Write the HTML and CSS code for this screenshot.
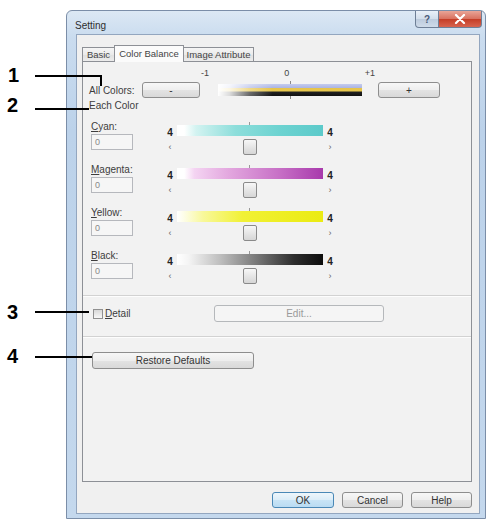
FILE: index.html
```html
<!DOCTYPE html>
<html>
<head>
<meta charset="utf-8">
<title>Setting</title>
<link rel="stylesheet" href="styles.css">
</head>
<body>
<div class="window">
  <div class="titlebar">
    <span class="title">Setting</span>
    <div class="caption-btns">
      <div class="cap help">?</div>
      <div class="cap close">
        <svg width="12" height="10" viewBox="0 0 12 10"><path d="M2 1 L10 9 M10 1 L2 9" stroke="#fff" stroke-width="2.2" stroke-linecap="round"/></svg>
      </div>
    </div>
  </div>
  <div class="client">
    <div class="tabs">
      <div class="tab t-basic">Basic</div>
      <div class="tab t-color active">Color Balance</div>
      <div class="tab t-image">Image Attribute</div>
    </div>
    <div class="panel">
      <div class="scale"><span>-1</span><span>0</span><span>+1</span></div>
      <div class="allrow">
        <span class="lbl">All Colors:</span>
        <div class="btn b-minus">-</div>
        <div class="allbar"></div>
        <div class="btn b-plus">+</div>
      </div>
      <div class="each">Each Color</div>
      <div class="colors">
        <div class="crow">
          <div class="ccol">
            <div class="clabel"><u>C</u>yan:</div>
            <div class="cinput">0</div>
          </div>
          <div class="slider">
            <div class="srow"><span class="snum">4</span><div class="bar cyan"></div><span class="snum">4</span></div>
            <div class="arrows"><span class="arr">&lsaquo;</span><div class="thumb"></div><span class="arr">&rsaquo;</span></div>
          </div>
        </div>
        <div class="crow">
          <div class="ccol">
            <div class="clabel"><u>M</u>agenta:</div>
            <div class="cinput">0</div>
          </div>
          <div class="slider">
            <div class="srow"><span class="snum">4</span><div class="bar magenta"></div><span class="snum">4</span></div>
            <div class="arrows"><span class="arr">&lsaquo;</span><div class="thumb"></div><span class="arr">&rsaquo;</span></div>
          </div>
        </div>
        <div class="crow">
          <div class="ccol">
            <div class="clabel"><u>Y</u>ellow:</div>
            <div class="cinput">0</div>
          </div>
          <div class="slider">
            <div class="srow"><span class="snum">4</span><div class="bar yellow"></div><span class="snum">4</span></div>
            <div class="arrows"><span class="arr">&lsaquo;</span><div class="thumb"></div><span class="arr">&rsaquo;</span></div>
          </div>
        </div>
        <div class="crow">
          <div class="ccol">
            <div class="clabel"><u>B</u>lack:</div>
            <div class="cinput">0</div>
          </div>
          <div class="slider">
            <div class="srow"><span class="snum">4</span><div class="bar black"></div><span class="snum">4</span></div>
            <div class="arrows"><span class="arr">&lsaquo;</span><div class="thumb"></div><span class="arr">&rsaquo;</span></div>
          </div>
        </div>
      </div>
      <div class="sep"></div>
      <div class="detail">
        <div class="dgroup"><span class="chk"></span><span class="dlabel"><u>D</u>etail</span></div>
        <div class="btn disabled b-edit">Edit...</div>
      </div>
      <div class="sep sep2"></div>
      <div class="btn b-restore">Restore Defaults</div>
    </div>
    <div class="footer">
      <div class="btn default b-ok">OK</div>
      <div class="btn b-cancel">Cancel</div>
      <div class="btn b-help">Help</div>
    </div>
  </div>
</div>

<div class="callout n1">1</div>
<div class="cline h1"></div>
<div class="cline v1"></div>
<div class="callout n2">2</div>
<div class="cline h2"></div>
<div class="callout n3">3</div>
<div class="cline h3"></div>
<div class="callout n4">4</div>
<div class="cline h4"></div>
</body>
</html>
```

FILE: styles.css
```css
* { box-sizing: border-box; }
html, body { margin: 0; padding: 0; }
body {
  width: 489px;
  height: 523px;
  background: #fff;
  font-family: "Liberation Sans", Arial, sans-serif;
  font-size: 10px;
  color: #3d3d3d;
  position: relative;
  overflow: hidden;
}

/* window frame */
.window {
  margin: 10px 0 0 66px;
  width: 420px;
  height: 509px;
  border: 1px solid #7b8ea8;
  border-radius: 6px 6px 0 0;
  background: linear-gradient(to bottom, #dce8f4 0, #cadcef 26px, #bcd2ea 120px, #c4d8ed 100%);
  display: flex;
  flex-direction: column;
}
.titlebar {
  height: 23px;
  display: flex;
  align-items: flex-start;
  padding-left: 8px;
}
.title { margin-top: 9px; font-size: 10px; color: #2e2e2e; }
.caption-btns { margin-left: auto; margin-right: 3px; display: flex; }
.cap {
  height: 17px;
  display: flex;
  align-items: center;
  justify-content: center;
  border: 1px solid #6e7f96;
  border-top: none;
}
.help {
  width: 24px;
  border-radius: 0 0 0 4px;
  background: linear-gradient(#e9f0f8, #d2deeb 50%, #bccbdd 51%, #cfdbe9);
  color: #4a5a78;
  font-size: 10px;
  font-weight: bold;
}
.close {
  width: 43px;
  border-left: none;
  border-radius: 0 0 4px 0;
  background: linear-gradient(#e9a597, #d8705e 50%, #c43d26 51%, #d8644f);
}

/* client */
.client {
  flex: 1;
  margin: 0 5px 4px 9px;
  background: #f0f0f0;
  border: 1px solid #93a6bf;
  display: flex;
  flex-direction: column;
  padding: 10px 7px 5px 5px;
}
.tabs {
  height: 16px;
  display: flex;
  align-items: flex-end;
  position: relative;
  z-index: 1;
}
.tab {
  height: 14px;
  border: 1px solid #8d9096;
  border-bottom: none;
  background: linear-gradient(#f5f5f5, #ebebeb 50%, #e0e0e0 51%, #ececec);
  line-height: 13px;
  text-align: center;
  font-size: 9.5px;
  color: #444;
  white-space: nowrap;
}
.t-basic { width: 32px; border-right: none; }
.t-color { width: 70px; }
.t-image { width: 70px; border-left: none; }
.tab.active {
  height: 17px;
  background: #fbfbfb;
  margin-bottom: -1px;
  line-height: 15px;
}

.panel {
  flex: 1;
  background: #f2f2f2;
  border: 1px solid #8d9096;
  display: flex;
  flex-direction: column;
}

.scale {
  margin: 6px 0 0 118px;
  width: 174px;
  height: 10px;
  line-height: 10px;
  display: flex;
  justify-content: space-between;
  font-size: 9px;
  color: #444;
}

.allrow {
  margin: 4px 0 0 6px;
  height: 16px;
  display: flex;
  align-items: center;
}
.lbl { width: 53px; white-space: nowrap; }
.allbar {
  position: relative;
  margin-left: 18px;
  width: 144px;
  height: 12px;
  background:
    linear-gradient(to right, #fff 0%, rgba(255,255,255,0.85) 8%, rgba(255,255,255,0.35) 22%, rgba(255,255,255,0) 38%),
    linear-gradient(to bottom, #c4cbee 0, #a9b3e2 35%, #e5c34c 36%, #e9c94e 62%, #222 63%, #111 100%);
}
.allbar::before, .allbar::after {
  content: "";
  position: absolute;
  left: 72px;
  width: 1px;
  height: 3px;
  background: #888;
}
.allbar::before { top: -3px; }
.allbar::after { bottom: -3px; }

.each { margin: 3px 0 0 6px; height: 10px; line-height: 10px; }

.colors { margin: 10px 0 0 8px; }
.crow {
  height: 43px;
  display: grid;
  grid-template-columns: 75px 168px;
}
.clabel { height: 11px; line-height: 11px; }
.cinput {
  margin-top: 2px;
  width: 42px;
  height: 16px;
  border: 1px solid #b6b8bd;
  background: #f6f6f6;
  padding-left: 3px;
  line-height: 14px;
  color: #888;
  font-size: 9px;
}
.slider { padding-top: 4px; }
.srow { display: flex; align-items: center; height: 11px; }
.snum {
  width: 8px;
  text-align: center;
  font-weight: bold;
  font-size: 10px;
  color: #222;
  line-height: 11px;
  position: relative;
  top: 2px;
}
.bar {
  position: relative;
  margin: 0 3px;
  width: 146px;
  height: 11px;
}
.bar::before {
  content: "";
  position: absolute;
  left: 72px;
  top: -3px;
  width: 1px;
  height: 3px;
  background: #999;
}
.cyan { background: linear-gradient(to right, #fff 0%, #fff 5%, #d3f3f1 13%, #8ddedb 40%, #6dd3d1 70%, #5ccaca 100%); }
.magenta { background: linear-gradient(to right, #fff 0%, #fff 5%, #f4d4f2 12%, #e3a8df 35%, #c770c6 70%, #a83aac 100%); }
.yellow { background: linear-gradient(to right, #fff 0%, #fdfde6 5%, #f8f89a 18%, #f1f135 45%, #ebeb12 100%); }
.black { background: linear-gradient(to right, #fff 0%, #f4f4f4 8%, #bdbdbd 30%, #777 55%, #2e2e2e 80%, #0d0d0d 100%); }

.arrows {
  margin-top: 3px;
  height: 16px;
  display: flex;
  justify-content: space-between;
  align-items: center;
}
.arr {
  width: 8px;
  text-align: center;
  font-size: 9px;
  color: #666;
  line-height: 9px;
}
.thumb {
  width: 14px;
  height: 16px;
  border: 1px solid #8a8a8a;
  border-radius: 2px;
  background: linear-gradient(#f7f7f7, #e6e6e6 50%, #d6d6d6);
}

.sep {
  margin-top: 2px;
  height: 2px;
  border-top: 1px solid #d2d2d2;
  border-bottom: 1px solid #fdfdfd;
}
.sep2 { margin-top: 14px; }

.detail {
  margin: 8px 0 0 10px;
  height: 17px;
  display: flex;
  align-items: center;
}
.dgroup { width: 121px; display: flex; align-items: center; }
.chk {
  width: 10px;
  height: 10px;
  border: 1px solid #909090;
  background: linear-gradient(#d8d8d8, #f8f8f8);
}
.dlabel { margin-left: 2px; }

.btn {
  display: flex;
  align-items: center;
  justify-content: center;
  height: 16px;
  border: 1px solid #8e8e8e;
  border-radius: 3px;
  background: linear-gradient(#f7f7f7 0, #eeeeee 50%, #e3e3e3 51%, #d9d9d9 100%);
  color: #333;
  font-size: 10px;
  white-space: nowrap;
}
.b-minus { width: 58px; }
.b-plus { width: 62px; margin-left: 16px; }
.b-edit { width: 170px; height: 17px; }
.btn.disabled {
  border-color: #b5b8bb;
  background: #f5f5f5;
  color: #9a9a9a;
}
.b-restore { margin: 14px 0 0 9px; width: 162px; height: 17px; }

.footer {
  margin-top: 10px;
  height: 16px;
  display: flex;
  justify-content: flex-end;
  gap: 8px;
}
.b-ok { width: 62px; }
.b-cancel { width: 61px; }
.b-help { width: 61px; }
.btn.default {
  border-color: #4a88b6;
  background: linear-gradient(#eef6fb, #dcedf8 50%, #c8e4f6 51%, #b9dbf2);
}

/* callout annotations */
.callout {
  position: absolute;
  font-family: "Liberation Sans", Arial, sans-serif;
  font-weight: bold;
  font-size: 20px;
  line-height: 20px;
  color: #000;
}
.n1 { left: 8px; top: 65px; }
.n2 { left: 7px; top: 95px; }
.n3 { left: 7px; top: 302px; }
.n4 { left: 7px; top: 346px; }
.cline { position: absolute; background: #000; }
.h1 { left: 35px; top: 75px; width: 67px; height: 2px; }
.v1 { left: 100px; top: 75px; width: 2px; height: 11px; }
.h2 { left: 35px; top: 108px; width: 54px; height: 2px; }
.h3 { left: 35px; top: 311px; width: 54px; height: 2px; }
.h4 { left: 35px; top: 356px; width: 57px; height: 2px; }
```
